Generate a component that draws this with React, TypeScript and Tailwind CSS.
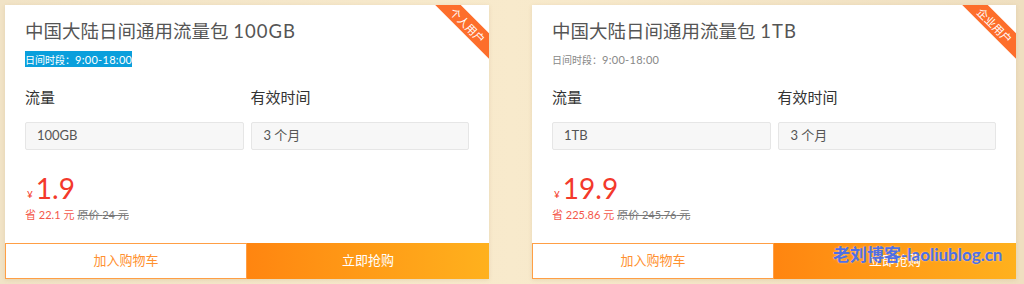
import React from "react";

const FONT = { fontFamily: '"Lato", "Noto Sans CJK SC", sans-serif' };

type CardProps = {
  title: string;
  size: string;
  highlight?: boolean;
  flow: string;
  price: string;
  save: string;
  orig: string;
  ribbon: string;
};

function Card({ title, size, highlight, flow, price, save, orig, ribbon }: CardProps) {
  return (
    <div className="relative flex h-[274px] w-[484px] flex-col overflow-hidden bg-white shadow-[0_1px_4px_rgba(160,130,70,0.18)]">
      <div className="absolute left-[423px] top-[11px] flex h-[18px] w-[80px] rotate-45 items-center justify-center bg-[#fd6e2b] text-[11px] leading-none text-white">
        {ribbon}
      </div>
      <div className="px-5">
        <div className="mt-[14px] text-[18.5px] leading-[24px] text-[#555]">
          {title} <span className="tracking-[1px]">{size}</span>
        </div>
        <div className="mt-[8px] flex">
          <span
            className={
              highlight
                ? "bg-[#0a9fdc] leading-[14px] text-white"
                : "leading-[14px] text-[#888]"
            }
          >
            <span className="text-[10px]">日间时段：</span>
            <span className="text-[11px] tracking-[0.3px]">9:00-18:00</span>
          </span>
        </div>
        <div className="mt-[20px] grid grid-cols-2 gap-x-[7px]">
          <div className="text-[15px] leading-[20px] text-[#333]">流量</div>
          <div className="text-[15px] leading-[20px] text-[#333]">有效时间</div>
          <div className="mt-[15px] flex h-[28px] items-center rounded-[2px] border border-[#e6e6e6] bg-[#f7f7f7] px-[11px] text-[13px] text-[#555]">
            {flow}
          </div>
          <div className="mt-[15px] flex h-[28px] items-center rounded-[2px] border border-[#e6e6e6] bg-[#f7f7f7] px-[12px] text-[13px] text-[#555]">
            3 个月
          </div>
        </div>
        <div className="mt-[24px] flex h-[28px] items-end text-[#f3392b]">
          <span className="mb-[3px] ml-[2px] mr-[3px] text-[10px] leading-none">¥</span>
          <span className="text-[28px] leading-[28px]">{price}</span>
        </div>
        <div className="mt-[5px] flex items-center gap-[3px] text-[11px] leading-[16px]">
          <span className="text-[#f4574a]">省 {save} 元</span>
          <span className="text-[#777] line-through">原价 {orig} 元</span>
        </div>
      </div>
      <div className="mt-auto grid h-[36px] grid-cols-2">
        <div className="flex items-center justify-center border border-[#ff9f45] bg-white text-[13px] text-[#ff9130]">
          加入购物车
        </div>
        <div className="flex items-center justify-center bg-linear-to-r from-[#ff8510] to-[#ffb11d] text-[13px] text-white">
          立即抢购
        </div>
      </div>
    </div>
  );
}

export default function App() {
  return (
    <div
      className="relative flex h-[284px] w-[1024px] gap-[43px] bg-linear-to-r from-[#f1e3c6] via-[#f8eacc] to-[#efdfc0] pl-[5px] pt-[5px]"
      style={FONT}
    >
      <Card
        title="中国大陆日间通用流量包"
        size="100GB"
        highlight
        flow="100GB"
        price="1.9"
        save="22.1"
        orig="24"
        ribbon="个人用户"
      />
      <Card
        title="中国大陆日间通用流量包"
        size="1TB"
        flow="1TB"
        price="19.9"
        save="225.86"
        orig="245.76"
        ribbon="企业用户"
      />
      <div className="absolute left-[833px] top-[245px] text-[17px] font-bold leading-[20px] text-[#4f6fe4] [text-shadow:0_0_2px_rgba(255,255,255,0.6)]">
        老刘博客-laoliublog.cn
      </div>
    </div>
  );
}
